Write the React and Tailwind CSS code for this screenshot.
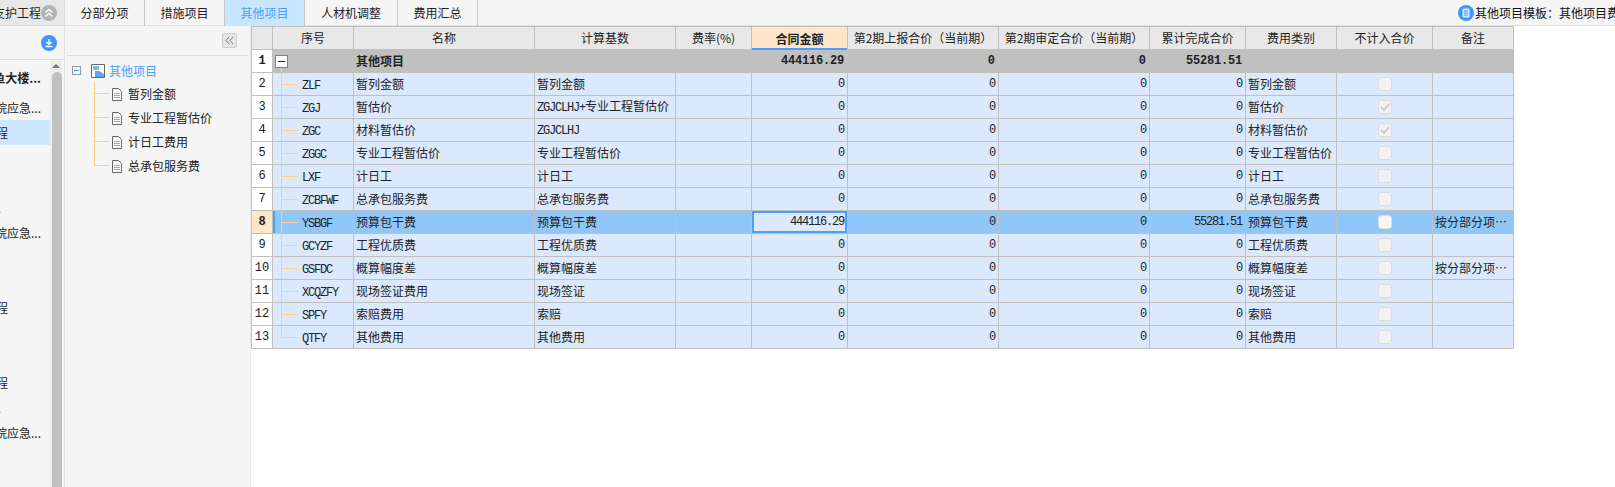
import React from "react";

const CJK = "font-['Noto_Sans_CJK_SC','Liberation_Sans',sans-serif]";
const MONO = "font-['Liberation_Mono','Noto_Sans_CJK_SC',monospace]";

const COLS = [22, 81, 181, 141, 76, 96, 151, 151, 96, 91, 96, 81];

const ROWS = [
  ["ZLF", "暂列金额", "暂列金额", "0", "0", "0", "0", "暂列金额", false, ""],
  ["ZGJ", "暂估价", "ZGJCLHJ+专业工程暂估价", "0", "0", "0", "0", "暂估价", true, ""],
  ["ZGC", "材料暂估价", "ZGJCLHJ", "0", "0", "0", "0", "材料暂估价", true, ""],
  ["ZGGC", "专业工程暂估价", "专业工程暂估价", "0", "0", "0", "0", "专业工程暂估价", false, ""],
  ["LXF", "计日工", "计日工", "0", "0", "0", "0", "计日工", false, ""],
  ["ZCBFWF", "总承包服务费", "总承包服务费", "0", "0", "0", "0", "总承包服务费", false, ""],
  ["YSBGF", "预算包干费", "预算包干费", "444116.29", "0", "0", "55281.51", "预算包干费", false, "按分部分项…"],
  ["GCYZF", "工程优质费", "工程优质费", "0", "0", "0", "0", "工程优质费", false, ""],
  ["GSFDC", "概算幅度差", "概算幅度差", "0", "0", "0", "0", "概算幅度差", false, "按分部分项…"],
  ["XCQZFY", "现场签证费用", "现场签证", "0", "0", "0", "0", "现场签证", false, ""],
  ["SPFY", "索赔费用", "索赔", "0", "0", "0", "0", "索赔", false, ""],
  ["QTFY", "其他费用", "其他费用", "0", "0", "0", "0", "其他费用", false, ""],
];

const HEADERS = ["序号", "名称", "计算基数", "费率(%)", "合同金额", "第2期上报合价（当前期）", "第2期审定合价（当前期）", "累计完成合价", "费用类别", "不计入合价", "备注"];

const LONG = "pr-[9px]";
const SHORT = "pr-[42px]";
const DOT = "pr-[49px]";

const LEFT_ROWS = [
  { text: "鱼大楼...", first: true, pad: LONG },
  { text: "院应急...", pad: LONG },
  { text: "程", active: true, pad: SHORT },
  { text: "", pad: LONG },
  { text: "", pad: LONG },
  { text: "1", pad: DOT },
  { text: "院应急...", pad: LONG },
  { text: "", pad: LONG },
  { text: "", pad: LONG },
  { text: "程", pad: SHORT },
  { text: "", pad: LONG },
  { text: "", pad: LONG },
  { text: "程", pad: SHORT },
  { text: "1", pad: DOT },
  { text: "院应急...", pad: LONG },
];

const TABS = [
  ["分部分项", "w-[80px]"],
  ["措施项目", "w-[80px]"],
  ["其他项目", "w-[80px]", true],
  ["人材机调整", "w-[93px]"],
  ["费用汇总", "w-[80px]"],
];

function Tabs() {
  return (
    <div className="flex h-[26px]">
      {TABS.map(([t, w, on]) => (
        <div
          key={t}
          className={`${w} flex items-center justify-center border-r border-[#c8c8c8] text-[12px] ${on ? "bg-[#c9e6ff] text-[#4a9eff]" : "text-[#222]"}`}
        >
          {t}
        </div>
      ))}
    </div>
  );
}

function DocIcon() {
  return (
    <svg width="10" height="13" viewBox="0 0 10 13" fill="none" className="shrink-0">
      <path d="M0.5 0.5H6.5L9.5 3.5V12.5H0.5Z" fill="#f8f8f8" stroke="#666" />
      <path d="M2 5.5H8M2 7.5H8M2 9.5H8" stroke="#aaa" />
    </svg>
  );
}

function FolderIcon() {
  return (
    <svg width="14" height="14" viewBox="0 0 14 14" fill="none" className="shrink-0">
      <path d="M0.5 0.5H13.5V13.5H0.5Z" fill="#fff" stroke="#666" />
      <rect x="2" y="2" width="6" height="4" fill="#7fb8f0" />
      <path d="M4 13V7H8L13 10V13Z" fill="#5aa7ef" />
    </svg>
  );
}

function Check({ checked, light }) {
  return (
    <div className={`mx-auto flex h-[14px] w-[14px] items-center justify-center rounded-[3px] border border-[#dcdcdc] ${light ? "bg-[#f7f7f7]" : "bg-[#f2f2f2]"}`}>
      {checked && (
        <svg width="10" height="8" viewBox="0 0 10 8" fill="none">
          <path d="M1 4L4 7L9 1" stroke="#c4c4c4" strokeWidth="1.6" />
        </svg>
      )}
    </div>
  );
}

function TopBar() {
  return (
    <div className="flex h-[26px] shrink-0 border-b border-[#e0e0e0] bg-[#f5f5f5]">
      <div className="flex h-[25px] w-[65px] shrink-0 items-center border-r border-[#dedede] bg-[#e8e8e8]">
        <div className="flex w-[41px] shrink-0 justify-end overflow-hidden whitespace-nowrap text-[12px] text-[#222]">
          支护工程
        </div>
        <div className="flex h-[16px] w-[16px] shrink-0 items-center justify-center rounded-full bg-[#b4b4b4]">
          <svg width="10" height="10" viewBox="0 0 10 10" fill="none">
            <path d="M1.5 4.5L5 1.5L8.5 4.5M1.5 8.5L5 5.5L8.5 8.5" stroke="#fff" strokeWidth="1.4" />
          </svg>
        </div>
      </div>
      <Tabs />
      <div className="ml-auto flex w-[157px] items-center gap-[1px] overflow-hidden whitespace-nowrap">
        <div className="flex h-[16px] w-[16px] shrink-0 items-center justify-center rounded-full bg-[#3f96fb]">
          <svg width="10" height="10" viewBox="0 0 10 10" fill="none">
            <rect x="1.5" y="0.5" width="7" height="9" rx="1" fill="#d9ebff" />
            <path d="M3 3H7M3 5H7M3 7H7" stroke="#3f96fb" />
          </svg>
        </div>
        <span className="text-[12px] text-[#111]">其他项目模板：其他项目费用</span>
      </div>
    </div>
  );
}

function LeftPanel() {
  return (
    <div className="flex w-[65px] shrink-0 flex-col border-r border-[#e0e0e0]">
      <div className="flex h-[34px] shrink-0 items-center justify-end border-b border-[#dcdcdc] pr-[7px]">
        <div className="flex h-[16px] w-[16px] items-center justify-center rounded-full bg-[#3f96fb]">
          <svg width="10" height="10" viewBox="0 0 10 10" fill="none">
            <path d="M5 1V6M2.5 4L5 6.5L7.5 4M1.5 8.5H8.5" stroke="#fff" strokeWidth="1.3" />
          </svg>
        </div>
      </div>
      <div className="flex min-h-0 flex-1">
        <div className="w-[50px] shrink-0 overflow-hidden">
          {LEFT_ROWS.map((r, i) => (
            <div
              key={i}
              className={`flex ${r.first ? "h-[35px]" : "h-[25px]"} items-center justify-end overflow-hidden whitespace-nowrap ${r.pad} text-[12px] text-[#222] ${r.active ? "bg-[#cde7ff]" : ""}`}
            >
              <span className={r.first ? "font-bold" : ""}>{r.text}</span>
            </div>
          ))}
        </div>
        <div className="flex w-[14px] shrink-0 flex-col">
          <div className="flex h-[12px] w-[12px] shrink-0 items-center justify-center bg-[#ededed]">
            <div className="h-0 w-0 border-x-[4px] border-b-[4px] border-x-transparent border-b-[#777]" />
          </div>
          <div className="flex flex-1">
            <div className="w-[2px] bg-[#ededed]" />
            <div className="w-[10px] rounded-t-[5px] bg-[#c0c0c0]" />
          </div>
        </div>
      </div>
    </div>
  );
}

function TreePanel() {
  const items = ["暂列金额", "专业工程暂估价", "计日工费用", "总承包服务费"];
  return (
    <div className="flex w-[186px] shrink-0 flex-col border-r border-[#e9e9e9] text-[12px]">
      <div className="mx-[2px] flex h-[30px] shrink-0 items-center justify-end border-b border-[#dddddd] pr-[11px]">
        <div className="flex h-[15px] w-[15px] items-center justify-center rounded-[2px] border border-[#cccccc] bg-[#e6e6e6]">
          <svg width="9" height="9" viewBox="0 0 9 9" fill="none">
            <path d="M4 1L1 4.5L4 8M8 1L5 4.5L8 8" stroke="#777" />
          </svg>
        </div>
      </div>
      <div className="flex h-[26px] items-center pl-[7px] pt-[3px]">
        <div className="flex h-[9px] w-[9px] shrink-0 items-center justify-center border border-[#999]">
          <div className="h-px w-[5px] bg-[#2ea8e6]" />
        </div>
        <div className="ml-[10px]"><FolderIcon /></div>
        <span className="ml-[4px] text-[#4a9eff]">其他项目</span>
      </div>
      {items.map((t, i) => (
        <div key={t} className="relative flex h-[24px] items-center pl-[47px]">
          <span className={`absolute left-[29px] top-0 w-px bg-[#ffcf85] ${i === 3 ? "h-[11px]" : "h-full"}`} />
          <span className="absolute left-[29px] top-[11px] h-px w-[15px] bg-[#ffcf85]" />
          <DocIcon />
          <span className="ml-[6px] text-[#222]">{t}</span>
        </div>
      ))}
    </div>
  );
}

function Code({ children }) {
  return <span className={`${MONO} text-[12px] tracking-[-1.2px] text-[#222]`}>{children}</span>;
}

function Base({ value }) {
  const m = value.match(/^([A-Z+]+)(.*)$/);
  if (!m) return value;
  return (
    <>
      <span className={`${MONO} text-[12px] tracking-[-1.2px]`}>{m[1]}</span>
      {m[2]}
    </>
  );
}

function GridTable() {
  const cell = "border-r border-b border-[#c0c0c0] whitespace-nowrap overflow-hidden p-0 h-[23px]";
  const num = `${cell} text-right pr-[3px] ${MONO} text-[12px] tracking-[-1.2px]`;
  const txt = `${cell} pl-[2px] text-[12px]`;

  return (
    <table className={`${CJK} table-fixed border-separate border-spacing-0 leading-[14px] text-[#222]`} style={{ width: 1263 }}>
      <colgroup>
        {COLS.map((w, i) => (
          <col key={i} style={{ width: w }} />
        ))}
      </colgroup>
      <thead>
        <tr>
          <th className="h-[24px] border border-[#c0c0c0] bg-[#e8e8e8] p-0" />
          {HEADERS.map((h) => {
            const on = h === "合同金额";
            return (
              <th
                key={h}
                className={`h-[24px] overflow-hidden whitespace-nowrap border-r border-t border-[#c0c0c0] p-0 text-center text-[12px] ${on ? "border-b-0 bg-[#ffe6c9] font-bold shadow-[inset_0_-2px_0_#4a9eff]" : "border-b bg-[#e8e8e8] font-normal"}`}
              >
                {h}
              </th>
            );
          })}
        </tr>
      </thead>
      <tbody>
        <tr className="bg-[#c0c0c0]">
          <td className={`h-[23px] border-b border-l border-r border-[#c0c0c0] bg-white p-0 text-center ${MONO} text-[12px] font-bold`}>1</td>
          <td className={`${cell} relative`}>
            <span className="absolute left-[2px] top-[5px] flex h-[13px] w-[13px] items-center justify-center border border-[#808080] bg-white">
              <span className="h-px w-[7px] bg-[#222]" />
            </span>
            <span className="absolute left-[8px] top-[18px] h-[5px] w-px bg-[#ffcf85]" />
          </td>
          <td className={`${txt} font-bold`}>其他项目</td>
          <td className={cell} />
          <td className={cell} />
          <td className={`${cell} pr-[3px] text-right ${MONO} text-[12px] font-bold tracking-[-0.2px]`}>444116.29</td>
          <td className={`${cell} pr-[3px] text-right ${MONO} text-[12px] font-bold`}>0</td>
          <td className={`${cell} pr-[3px] text-right ${MONO} text-[12px] font-bold`}>0</td>
          <td className={`${cell} pr-[3px] text-right ${MONO} text-[12px] font-bold tracking-[-0.2px]`}>55281.51</td>
          <td className={cell} />
          <td className={cell} />
          <td className={cell} />
        </tr>
        {ROWS.map((r, i) => {
          const sel = i === 6;
          const last = i === ROWS.length - 1;
          return (
            <tr key={r[0]} className={sel ? "bg-[#90c7f8]" : "bg-[#dce9fd]"}>
              <td className={`h-[23px] border-b border-l border-r border-[#c0c0c0] p-0 text-center ${MONO} text-[12px] ${sel ? "bg-[#ffe6c9] font-bold" : "bg-white"}`}>
                {i + 2}
              </td>
              <td className={`${cell} relative pl-[29px] ${sel ? "shadow-[inset_2px_0_0_#4a9eff]" : ""}`}>
                <span className={`absolute left-[8px] top-0 w-px bg-[#ffcf85] ${last ? "h-[11px]" : "h-full"}`} />
                <span className="absolute left-[8px] top-[11px] h-px w-[17px] bg-[#ffcf85]" />
                <Code>{r[0]}</Code>
              </td>
              <td className={txt}>{r[1]}</td>
              <td className={txt}><Base value={r[2]} /></td>
              <td className={cell} />
              <td className={`${num} ${sel ? "bg-[#dce9fd] shadow-[inset_0_0_0_2px_#4a9eff]" : ""}`}>{r[3]}</td>
              <td className={num}>{r[4]}</td>
              <td className={num}>{r[5]}</td>
              <td className={num}>{r[6]}</td>
              <td className={txt}>{r[7]}</td>
              <td className={cell}><Check checked={r[8]} light={sel} /></td>
              <td className={txt}>{r[9]}</td>
            </tr>
          );
        })}
      </tbody>
    </table>
  );
}

export default function App() {
  return (
    <div className={`${CJK} flex h-[487px] w-[1615px] flex-col overflow-hidden bg-[#f5f5f5]`}>
      <TopBar />
      <div className="flex min-h-0 flex-1">
        <LeftPanel />
        <TreePanel />
        <div className="min-w-0 flex-1 bg-white">
          <GridTable />
        </div>
      </div>
    </div>
  );
}
